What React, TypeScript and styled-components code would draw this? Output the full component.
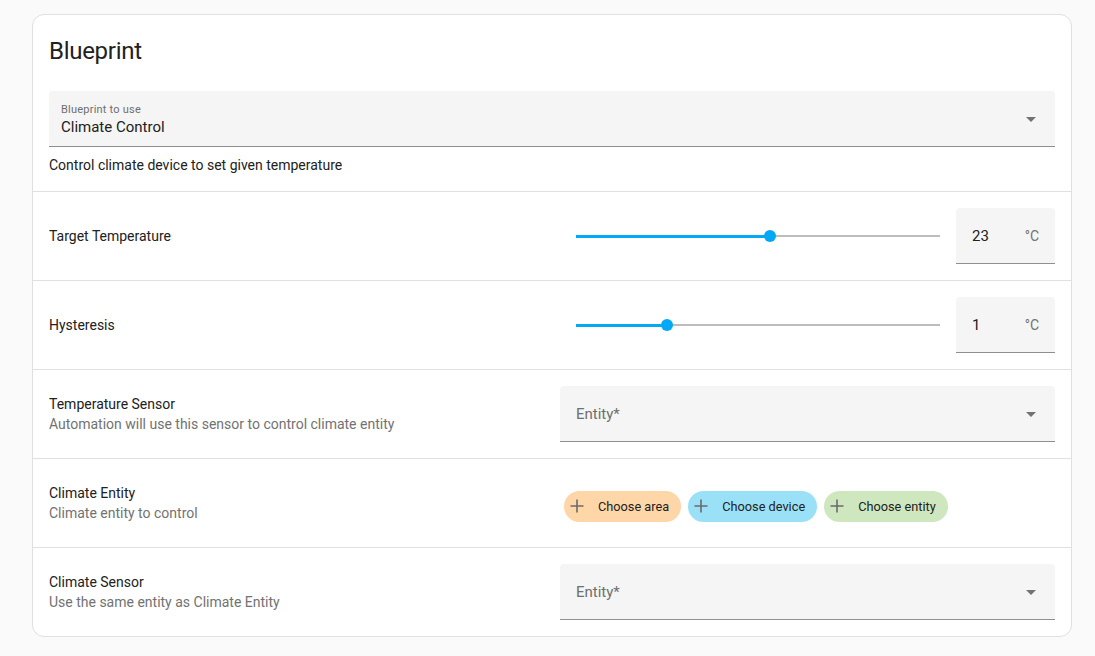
import React from "react";
import styled, { createGlobalStyle } from "styled-components";

const Global = createGlobalStyle`
  html, body { margin: 0; padding: 0; background: #fafafa; }
  body { font-family: Roboto, "Noto Sans", "Liberation Sans", sans-serif; color: #212121; -webkit-font-smoothing: antialiased; }
  * { box-sizing: border-box; }
`;

const Page = styled.div`
  padding: 14px 23px 20px 32px;
`;

const Card = styled.div`
  width: 1040px;
  background: #fff;
  border: 1px solid #e0e0e0;
  border-radius: 12px;
`;

const Header = styled.div`
  font-size: 24px;
  line-height: 48px;
  letter-spacing: -0.012em;
  padding: 12px 16px 16px;
  color: #212121;
`;

const BlueprintSection = styled.div`
  padding: 0 16px 16px;
`;

const FilledField = styled.div<{ $w?: string }>`
  position: relative;
  height: 56px;
  width: ${(p) => p.$w ?? "100%"};
  background: #f5f5f5;
  border-radius: 4px 4px 0 0;
  border-bottom: 1px solid #8f8f8f;
  display: flex;
  align-items: center;
`;

const SelectInner = styled.div`
  flex: 1;
  align-self: flex-start;
  display: flex;
  flex-direction: column;
  padding: 11px 0 0 12px;
`;

const FloatLabel = styled.span`
  font-size: 11px;
  line-height: 16px;
  color: #6f6f6f;
  letter-spacing: 0.02em;
`;

const SelectValue = styled.span`
  font-size: 15px;
  line-height: 16px;
  margin-top: 1px;
  color: #212121;
`;

const Arrow = styled.span`
  width: 0;
  height: 0;
  border-left: 5px solid transparent;
  border-right: 5px solid transparent;
  border-top: 5px solid #737373;
  margin-right: 19px;
  margin-top: 1px;
`;

const Placeholder = styled.span`
  flex: 1;
  padding-left: 16px;
  font-size: 15px;
  color: #6f6f6f;
`;

const Description = styled.div`
  margin-top: 8px;
  font-size: 14px;
  line-height: 20px;
  color: #212121;
`;

const Row = styled.div`
  display: flex;
  align-items: center;
  min-height: 89px;
  padding: 16px;
  border-top: 1px solid #e0e0e0;
`;

const Info = styled.div`
  flex: 1;
  display: flex;
  flex-direction: column;
  font-size: 14px;
  line-height: 20px;
`;

const Name = styled.span`
  color: #212121;
`;

const Secondary = styled.span`
  color: #727272;
`;

const Control = styled.div<{ $offset?: number }>`
  width: 495px;
  display: flex;
  align-items: center;
  margin-top: ${(p) => p.$offset ?? 0}px;
`;

const SliderBox = styled.div`
  flex: 1;
  padding: 0 16px;
  height: 56px;
  display: flex;
  align-items: center;
`;

const Track = styled.div`
  position: relative;
  flex: 1;
  height: 2px;
  background: #bdbdbd;
`;

const Active = styled.div`
  position: absolute;
  left: 0;
  top: -0.5px;
  height: 3px;
  background: #03a9f4;
`;

const Thumb = styled.div`
  position: absolute;
  top: 50%;
  width: 12px;
  height: 12px;
  margin: -6px 0 0 -6px;
  border-radius: 50%;
  background: #03a9f4;
`;

const NumberValue = styled.span`
  flex: 1;
  padding-left: 16px;
  font-size: 15px;
  color: #212121;
`;

const Suffix = styled.span`
  padding-right: 16px;
  font-size: 14px;
  color: #727272;
`;

const Chips = styled.div`
  display: flex;
  gap: 7px;
  padding-left: 4px;
`;

const Chip = styled.div<{ $bg: string }>`
  display: flex;
  align-items: center;
  height: 31px;
  border-radius: 16px;
  background: ${(p) => p.$bg};
  padding: 0 12px 0 6px;
  font-size: 12.75px;
  color: #212121;
`;

const ChipIcon = styled.svg`
  width: 14px;
  height: 14px;
  margin-right: 14px;
`;

const Plus = () => (
  <ChipIcon viewBox="0 0 14 14">
    <path d="M7 0.5V13.5M0.5 7H13.5" stroke="#6b6b6b" strokeWidth="1.6" fill="none" />
  </ChipIcon>
);

const Slider = ({ pct }: { pct: number }) => (
  <SliderBox>
    <Track>
      <Active style={{ width: `${pct}%` }} />
      <Thumb style={{ left: `${pct}%` }} />
    </Track>
  </SliderBox>
);

const NumberField = ({ value }: { value: string }) => (
  <FilledField $w="99px">
    <NumberValue>{value}</NumberValue>
    <Suffix>°C</Suffix>
  </FilledField>
);

const EntityField = () => (
  <FilledField>
    <Placeholder>Entity*</Placeholder>
    <Arrow />
  </FilledField>
);

export default function App() {
  return (
    <>
      <Global />
      <Page>
        <Card>
          <Header>Blueprint</Header>
          <BlueprintSection>
            <FilledField>
              <SelectInner>
                <FloatLabel>Blueprint to use</FloatLabel>
                <SelectValue>Climate Control</SelectValue>
              </SelectInner>
              <Arrow />
            </FilledField>
            <Description>Control climate device to set given temperature</Description>
          </BlueprintSection>

          <Row>
            <Info>
              <Name>Target Temperature</Name>
            </Info>
            <Control>
              <Slider pct={(8 / 15) * 100} />
              <NumberField value="23" />
            </Control>
          </Row>

          <Row>
            <Info>
              <Name>Hysteresis</Name>
            </Info>
            <Control>
              <Slider pct={25} />
              <NumberField value="1" />
            </Control>
          </Row>

          <Row>
            <Info>
              <Name>Temperature Sensor</Name>
              <Secondary>Automation will use this sensor to control climate entity</Secondary>
            </Info>
            <Control>
              <EntityField />
            </Control>
          </Row>

          <Row>
            <Info>
              <Name>Climate Entity</Name>
              <Secondary>Climate entity to control</Secondary>
            </Info>
            <Control $offset={6}>
              <Chips>
                <Chip $bg="#ffd6a8">
                  <Plus />
                  Choose area
                </Chip>
                <Chip $bg="#9ae1f7">
                  <Plus />
                  Choose device
                </Chip>
                <Chip $bg="#cee7bf">
                  <Plus />
                  Choose entity
                </Chip>
              </Chips>
            </Control>
          </Row>

          <Row>
            <Info>
              <Name>Climate Sensor</Name>
              <Secondary>Use the same entity as Climate Entity</Secondary>
            </Info>
            <Control>
              <EntityField />
            </Control>
          </Row>
        </Card>
      </Page>
    </>
  );
}
